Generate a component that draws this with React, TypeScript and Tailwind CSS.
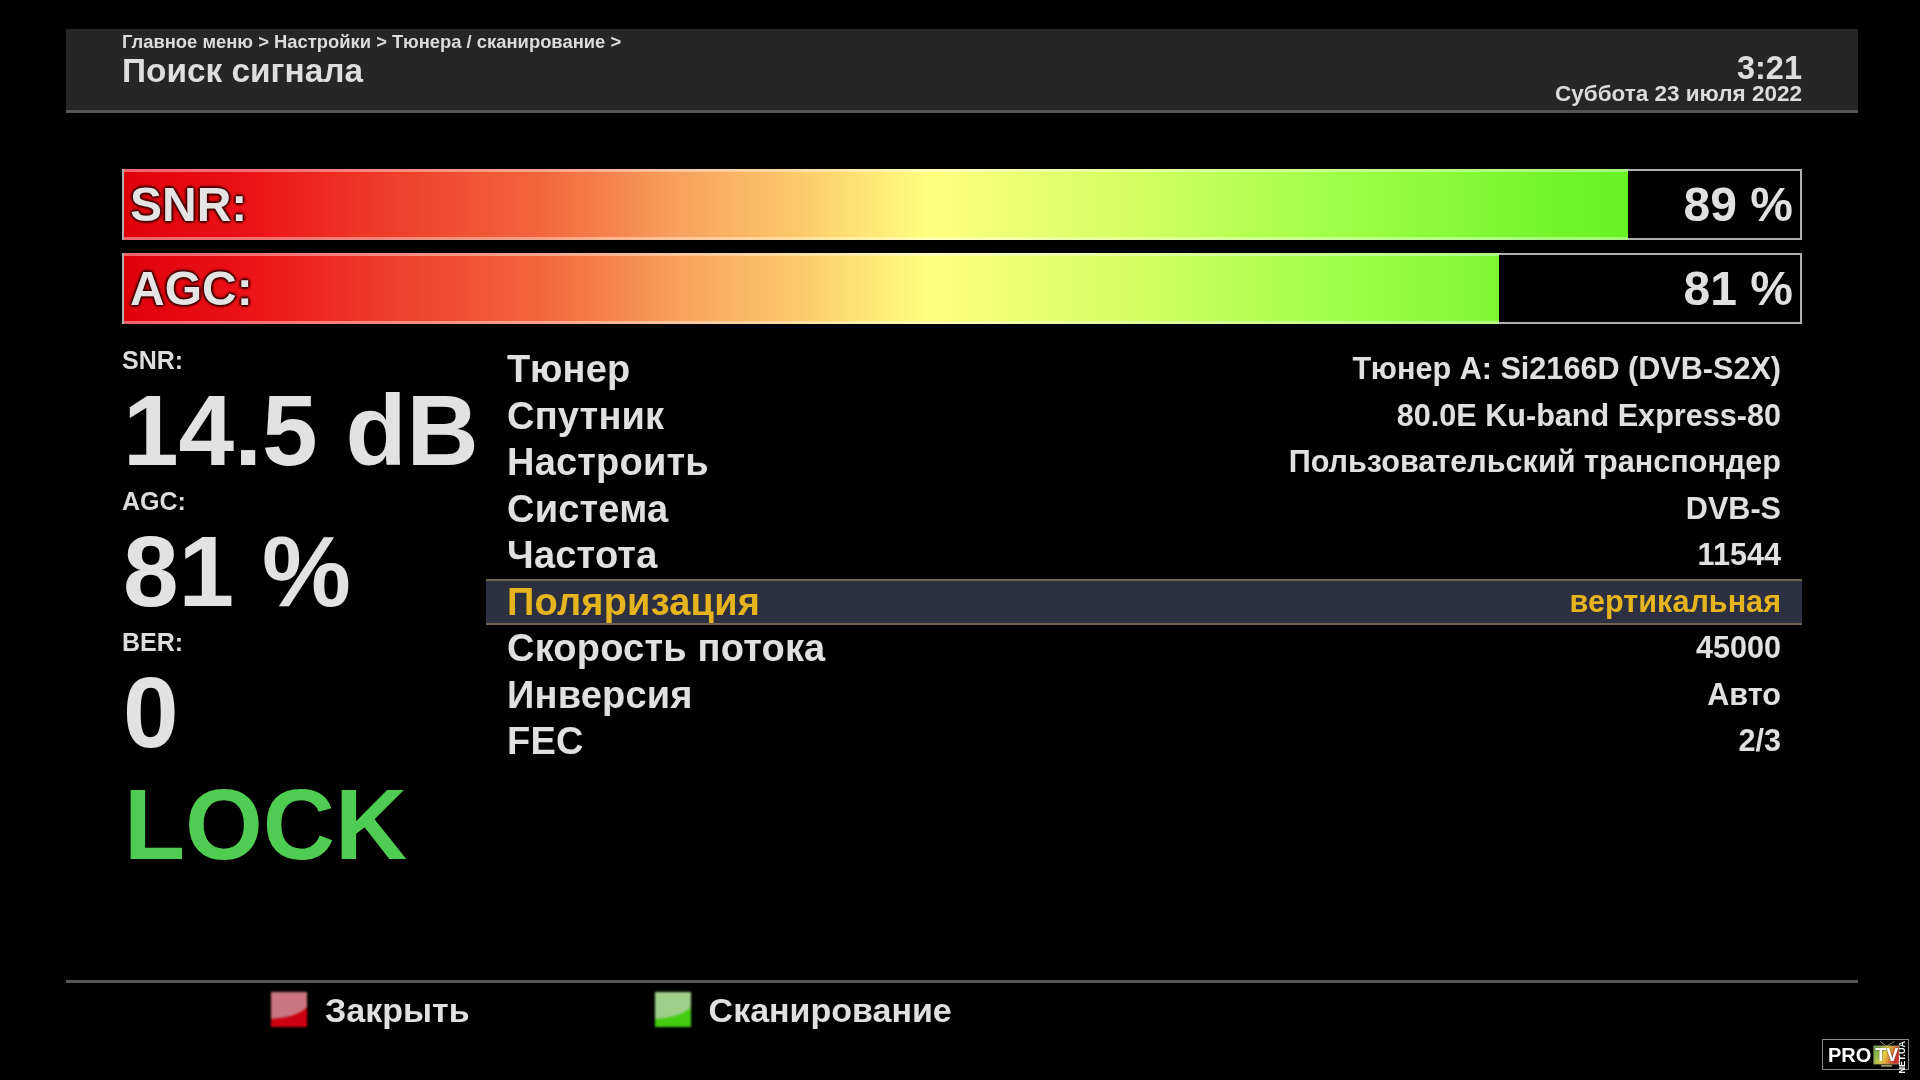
import React from "react";

const rows: [string, string][] = [
  ["Тюнер", "Тюнер A: Si2166D (DVB-S2X)"],
  ["Спутник", "80.0E Ku-band Express-80"],
  ["Настроить", "Пользовательский транспондер"],
  ["Система", "DVB-S"],
  ["Частота", "11544"],
  ["Поляризация", "вертикальная"],
  ["Скорость потока", "45000"],
  ["Инверсия", "Авто"],
  ["FEC", "2/3"],
];

function Bar({ label, value, fill }: { label: string; value: string; fill: number }) {
  return (
    <div className="relative h-[71px] border-2 border-[#b0b0b0] bg-black flex items-center justify-between">
      <div
        className="absolute left-0 top-[-2px] bottom-[-2px] border-y-[3px] border-white/40 bg-[length:1676px_100%] bg-[linear-gradient(90deg,#e0000c_0%,#ee1418_8%,#ee3a28_15%,#f4663c_25%,#f8a05c_33%,#fcc868_40%,#ffff80_48%,#d4ff60_60%,#a0ff48_72%,#66f224_89%,#55f010_100%)]"
        style={{ width: `${fill}px` }}
      />
      <span className="relative pl-[6px] text-[48px] leading-none font-bold text-[#e4e4e4] [text-shadow:0_0_2px_#300000,2px_0_2px_#500000,-2px_0_2px_#500000,0_2px_2px_#500000,0_-2px_2px_#500000]">
        {label}
      </span>
      <span className="relative pr-[7px] text-[48px] leading-none font-bold text-[#e0e0e0]">{value}</span>
    </div>
  );
}

function Stat({ label, value }: { label: string; value: string }) {
  return (
    <div>
      <div className="text-[25px] leading-[24px] font-bold text-[#dcdcdc]">{label}</div>
      <div className="h-[117px] pt-[4px] pl-[1px] text-[100px] leading-[108px] font-bold text-[#e2e2e2] whitespace-nowrap">{value}</div>
    </div>
  );
}

function Key({ bottom, top, label }: { bottom: string; top: string; label: string }) {
  return (
    <div className="flex items-center gap-[18px]">
      <div className={`relative w-[36px] h-[35px] overflow-hidden blur-[1px] ${bottom}`}>
        <svg viewBox="0 0 36 35" className="absolute inset-0 w-full h-full">
          <path d="M0 0H36V15C30 22 16 26 0 27Z" fill={top} />
        </svg>
      </div>
      <span className="text-[34px] leading-none font-bold text-[#e0e0e0]">{label}</span>
    </div>
  );
}

export default function App() {
  return (
    <div className="relative w-[1920px] h-[1080px] overflow-hidden bg-black pl-[66px] pr-[62px] pt-[29px] font-['Liberation_Sans',Arial,sans-serif] blur-[0.5px]">
      <header className="h-[84px] bg-[#262626] border-b-[3px] border-[#565656] px-[56px] flex justify-between">
        <div className="pt-[1px]">
          <div className="text-[18.4px] leading-[24px] font-bold text-[#dcdcdc]">
            Главное меню &gt; Настройки &gt; Тюнера / сканирование &gt;
          </div>
          <div className="text-[33.4px] leading-[34px] font-bold text-[#dedede]">Поиск сигнала</div>
        </div>
        <div className="pt-[25px] text-right">
          <div className="text-[32.5px] leading-[28px] font-bold text-[#dedede]">3:21</div>
          <div className="text-[22.5px] leading-[23px] font-bold text-[#dcdcdc]">Суббота 23 июля 2022</div>
        </div>
      </header>

      <div className="mt-[56px] ml-[56px] w-[1680px] flex flex-col gap-[13px]">
        <Bar label="SNR:" value="89 %" fill={1504} />
        <Bar label="AGC:" value="81 %" fill={1375} />
      </div>

      <div className="ml-[56px] w-[1680px] mt-[24px] flex">
        <div className="w-[364px] shrink-0">
          <Stat label="SNR:" value="14.5 dB" />
          <Stat label="AGC:" value="81 %" />
          <Stat label="BER:" value="0" />
          <div className="mt-[-1px] pl-[2px] text-[100px] leading-[108px] font-bold text-[#4fcc52]">LOCK</div>
        </div>
        <div className="flex-1 mt-[-2px]">
          {rows.map(([k, v], i) => {
            const active = i === 5;
            return (
              <div
                key={k}
                className={`h-[46.5px] px-[21px] flex items-center justify-between font-bold whitespace-nowrap ${
                  active
                    ? "bg-[#2d3040] border-y-2 border-[#706350] text-[#e6b41c]"
                    : "text-[#e0e0e0]"
                }`}
              >
                <span className="text-[38px] leading-none tracking-[0.2px]">{k}</span>
                <span className="pb-[1px] text-[30.6px] leading-none">{v}</span>
              </div>
            );
          })}
        </div>
      </div>

      <footer className="absolute left-[66px] right-[62px] top-[980px] border-t-[3px] border-[#565656] pt-[9px] pl-[205px] flex gap-[185px]">
        <Key bottom="bg-[#cc0010]" top="#c9767e" label="Закрыть" />
        <Key bottom="bg-[#44cc10]" top="#9fcf88" label="Сканирование" />
      </footer>

      <div className="absolute left-[1822px] top-[1039px] w-[87px] h-[31px] border border-[#8a8a8a] bg-black flex items-center">
        <span className="pl-[5px] text-[20px] leading-none font-bold text-white">PRO</span>
        <span className="relative ml-[2px] w-[27px] h-[28px]">
          <svg viewBox="0 0 30 30" className="absolute inset-0 w-full h-full">
            <defs>
              <linearGradient id="tvscreen" x1="0" x2="1" y1="0" y2="0.3">
                <stop offset="0" stopColor="#3fa34d" />
                <stop offset="0.5" stopColor="#e8d840" />
                <stop offset="1" stopColor="#d03030" />
              </linearGradient>
            </defs>
            <path d="M8 0L15 5L24 0" stroke="#9a9a70" strokeWidth="1" fill="none" />
            <rect x="1" y="5" width="28" height="20" fill="url(#tvscreen)" stroke="#a09a60" strokeWidth="1" />
            <rect x="9" y="26" width="12" height="2" fill="#a09a60" />
          </svg>
          <span className="absolute inset-0 text-[18px] leading-[28px] text-center font-bold text-white [text-shadow:0_0_2px_#333]">TV</span>
        </span>
        <span className="absolute right-[1px] top-[1px] text-[9px] leading-none font-bold text-white [writing-mode:vertical-rl] rotate-180">NET.UA</span>
      </div>
    </div>
  );
}
